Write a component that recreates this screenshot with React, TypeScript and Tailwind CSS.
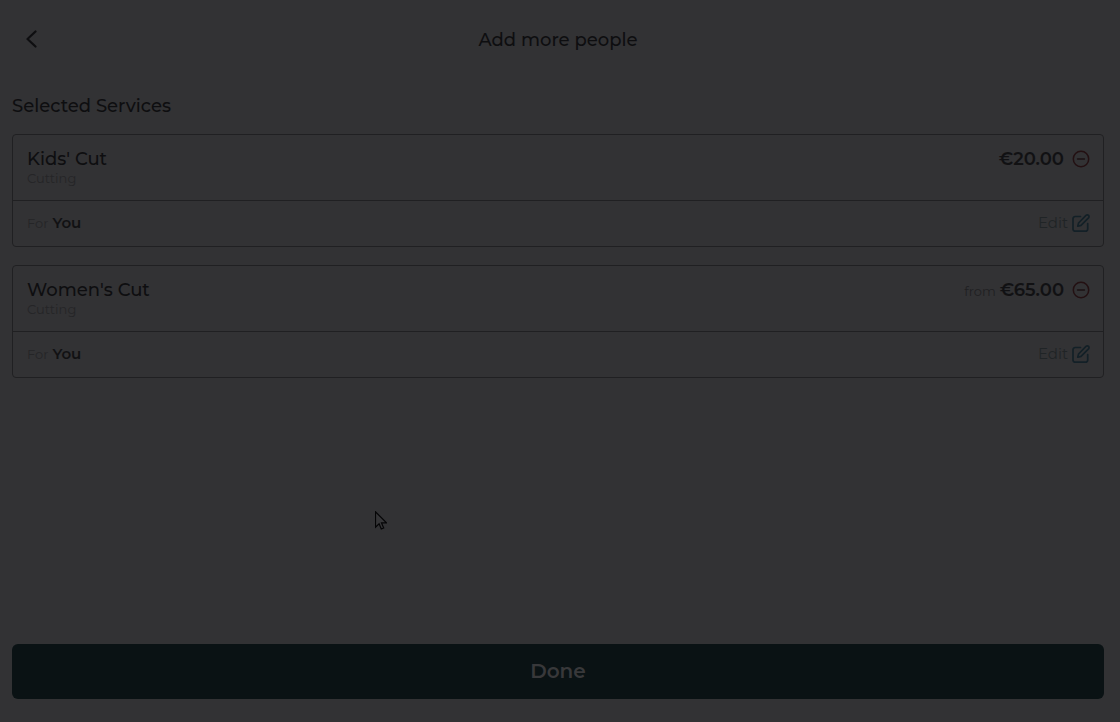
import React, { useState } from 'react';

interface Service {
  id: number;
  name: string;
  category: string;
  price: string;
  isFrom: boolean;
  person: string;
}

const initialServices: Service[] = [
  { id: 1, name: "Kids' Cut", category: 'Cutting', price: '€20.00', isFrom: false, person: 'You' },
  { id: 2, name: "Women's Cut", category: 'Cutting', price: '€65.00', isFrom: true, person: 'You' },
];

const BackIcon = () => (
  <svg width="12" height="18" viewBox="0 0 12 18" fill="none" stroke="currentColor" strokeWidth="2.2" strokeLinecap="round" strokeLinejoin="round" aria-hidden="true">
    <path d="M9.500 1.500 1.500 9l8 7.500" />
  </svg>
);

const RemoveIcon = () => (
  <svg width="18" height="18" viewBox="0 0 18 18" fill="none" strokeLinecap="round" aria-hidden="true">
    <circle cx="9" cy="9" r="7.7" stroke="#231012" strokeWidth="1.5" />
    <path d="M5.500 9h7" stroke="#1b1012" strokeWidth="1.3" />
  </svg>
);

const EditIcon = () => (
  <svg width="18" height="20" viewBox="0 0 18 20" fill="none" stroke="#132027" strokeWidth="1.7" strokeLinecap="round" strokeLinejoin="round" aria-hidden="true">
    <path d="M8.500 2.500H3.200A2.200 2.200 0 0 0 1 4.700V15a2.200 2.200 0 0 0 2.200 2.200h10.300A2.200 2.200 0 0 0 15.700 15V9.500" />
    <path d="M14 1.400a1.750 1.750 0 0 1 2.500 2.500L9 11.400l-3.200.8.8-3.200z" />
  </svg>
);

const Pointer = () => (
  <svg className="pointer-events-none absolute left-[375px] top-[511px]" width="12" height="19" viewBox="0 0 12 19" aria-hidden="true">
    <path d="M.5.8v15.400l3.600-3.400 2.200 5.200 2.400-1-2.200-5.100h5z" fill="#353537" stroke="#050506" strokeWidth="1.2" />
  </svg>
);

const App: React.FC = () => {
  const [services, setServices] = useState<Service[]>(initialServices);

  const removeService = (id: number) => {
    setServices(services.filter(s => s.id !== id));
  };

  return (
    <div className="relative flex min-h-screen flex-col bg-[#323234] pr-4 pb-[23px] pl-3 font-['Montserrat','Inter',sans-serif] text-[#0e0e10]">
      <header className="grid h-20 grid-cols-[40px_1fr_40px] items-center">
        <button type="button" aria-label="Back" className="flex h-10 w-10 items-center justify-center pb-0.5">
          <BackIcon />
        </button>
        <h1 className="text-center text-lg leading-6 font-medium">Add more people</h1>
      </header>

      <main className="flex-1 pt-3.5">
        <h2 className="text-lg leading-6 font-medium">Selected Services</h2>
        <ul className="mt-4 flex flex-col gap-[18px]">
          {services.map(s => (
            <li key={s.id} className="rounded border border-[#202022]">
              <div className="flex h-[66px] items-start justify-between border-b border-[#202022] pt-3 pr-[13px] pl-3.5">
                <div>
                  <h3 className="text-lg leading-6 font-medium">{s.name}</h3>
                  <p className="text-[13px] leading-3.5 text-[#252527]">{s.category}</p>
                </div>
                <div className="flex h-6 items-center">
                  <p className="flex items-baseline gap-1">
                    {s.isFrom && <span className="text-[13px] text-[#202022]">from</span>}
                    <span className="text-lg leading-6 font-semibold text-[#111113]">{s.price}</span>
                  </p>
                  <button type="button" aria-label={`Remove ${s.name}`} onClick={() => removeService(s.id)} className="ml-2">
                    <RemoveIcon />
                  </button>
                </div>
              </div>
              <div className="flex h-[45px] items-center justify-between pr-[13px] pl-3.5">
                <p className="flex items-baseline gap-1">
                  <span className="text-[13px] text-[#252527]">For</span>
                  <span className="text-[15px] font-semibold text-[#111113]">{s.person}</span>
                </p>
                <button type="button" className="flex items-center gap-1 text-[15px] text-[#202426]">
                  Edit
                  <EditIcon />
                </button>
              </div>
            </li>
          ))}
        </ul>
      </main>

      <button type="button" className="h-[55px] w-full rounded-md bg-[#0a1214] pb-0.5 text-xl font-semibold text-[#38383a]">
        Done
      </button>

      <Pointer />
    </div>
  );
};

export default App;
